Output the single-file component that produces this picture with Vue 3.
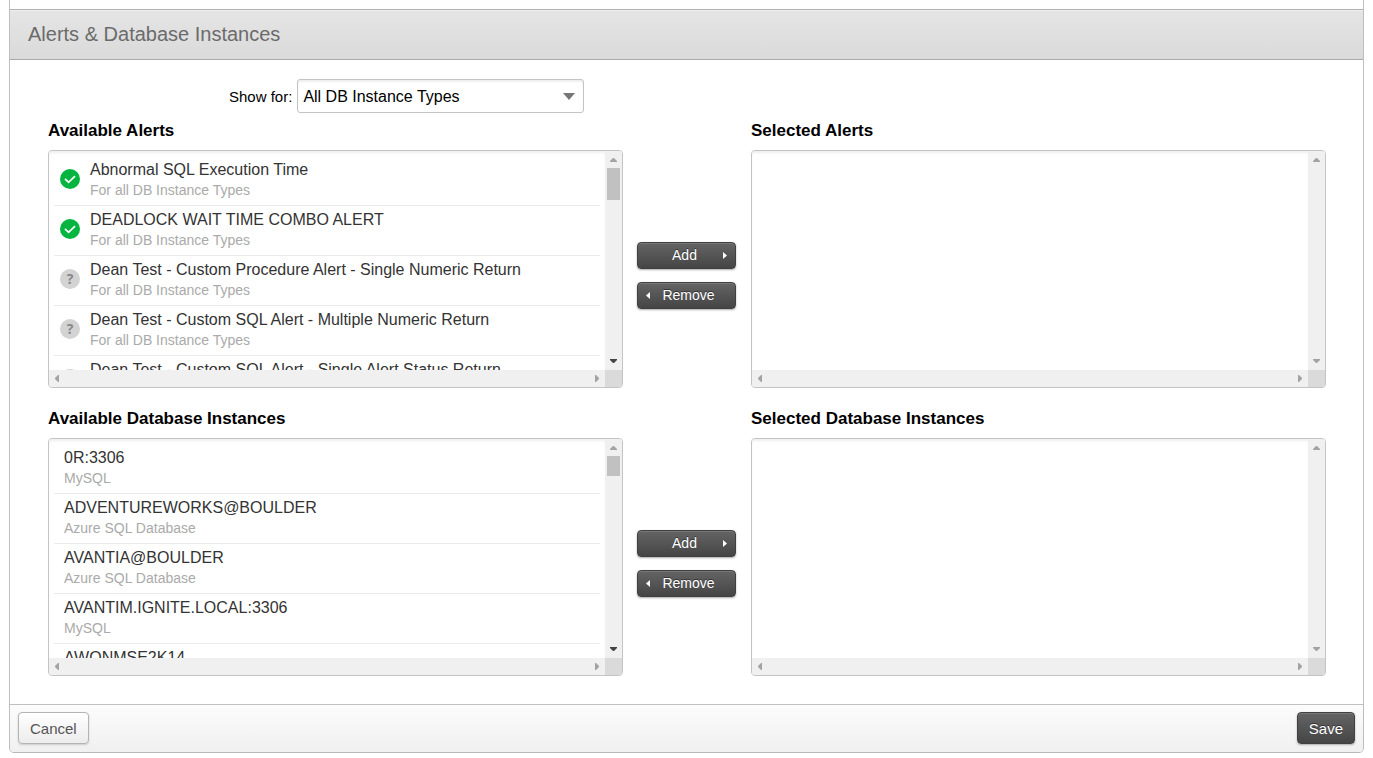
<script setup>
import { ref } from 'vue'

const instanceType = ref('all')

const groups = [
  {
    id: 'alerts',
    available: 'Available Alerts',
    selected: 'Selected Alerts',
    thumb: 'long',
    items: [
      { title: 'Abnormal SQL Execution Time', note: 'For all DB Instance Types', status: 'ok' },
      { title: 'DEADLOCK WAIT TIME COMBO ALERT', note: 'For all DB Instance Types', status: 'ok' },
      { title: 'Dean Test - Custom Procedure Alert - Single Numeric Return', note: 'For all DB Instance Types', status: 'unknown' },
      { title: 'Dean Test - Custom SQL Alert - Multiple Numeric Return', note: 'For all DB Instance Types', status: 'unknown' },
      { title: 'Dean Test - Custom SQL Alert - Single Alert Status Return', note: 'For all DB Instance Types', status: 'unknown' }
    ]
  },
  {
    id: 'instances',
    available: 'Available Database Instances',
    selected: 'Selected Database Instances',
    thumb: 'short',
    items: [
      { title: '0R:3306', note: 'MySQL' },
      { title: 'ADVENTUREWORKS@BOULDER', note: 'Azure SQL Database' },
      { title: 'AVANTIA@BOULDER', note: 'Azure SQL Database' },
      { title: 'AVANTIM.IGNITE.LOCAL:3306', note: 'MySQL' },
      { title: 'AWONMSE2K14', note: '' }
    ]
  }
]
</script>

<template>
  <main class="panel">
    <header class="panel-head">
      <h1>Alerts &amp; Database Instances</h1>
    </header>

    <div class="panel-body">
      <div class="filter">
        <label for="instance-type">Show for:</label>
        <div class="select-wrap">
          <select id="instance-type" v-model="instanceType">
            <option value="all">All DB Instance Types</option>
          </select>
          <svg class="caret" width="12" height="8" viewBox="0 0 12 8" aria-hidden="true">
            <path d="M0 1h12L6 8z" fill="#777" />
          </svg>
        </div>
      </div>

      <div v-for="group in groups" :key="group.id" class="picker">
        <section v-for="side in ['available', 'selected']" :key="side" :class="['column', side]">
          <h2>{{ group[side] }}</h2>
          <div class="listbox">
            <ul class="list">
              <template v-if="side === 'available'">
                <li v-for="item in group.items" :key="item.title" class="item">
                  <span v-if="item.status === 'ok'" class="status ok">
                    <svg width="20" height="20" viewBox="0 0 20 20" aria-hidden="true">
                      <path d="M5 9.8l3.6 3.6L15 7.2" fill="none" stroke="#fff" stroke-width="1.7" />
                    </svg>
                  </span>
                  <span v-else-if="item.status" class="status unknown">?</span>
                  <div class="item-text">
                    <div class="title">{{ item.title }}</div>
                    <div v-if="item.note" class="note">{{ item.note }}</div>
                  </div>
                </li>
              </template>
            </ul>
            <div class="bar vertical" aria-hidden="true">
              <svg width="17" height="17" viewBox="0 0 17 17"><path d="M5 11v-1l3-3h1l3 3v1z" fill="#a3a3a3" /></svg>
              <div v-if="side === 'available'" :class="['thumb', group.thumb]"></div>
              <svg class="end" width="17" height="17" viewBox="0 0 17 17">
                <path d="M5 6v1l3 3h1l3-3V6z" :fill="side === 'available' ? '#454545' : '#a3a3a3'" />
              </svg>
            </div>
            <div class="bar horizontal" aria-hidden="true">
              <svg width="17" height="17" viewBox="0 0 17 17"><path d="M10 5H9L6 8v1l3 3h1z" fill="#a3a3a3" /></svg>
              <svg class="end" width="17" height="17" viewBox="0 0 17 17"><path d="M7 5h1l3 3v1l-3 3H7z" fill="#a3a3a3" /></svg>
            </div>
            <div class="corner"></div>
          </div>
        </section>

        <div class="moves">
          <button type="button" class="btn dark move">
            <span>Add</span>
            <svg width="4" height="7" viewBox="0 0 4 7" aria-hidden="true"><path d="M0 0l4 3.5L0 7z" fill="#fff" /></svg>
          </button>
          <button type="button" class="btn dark move">
            <svg width="4" height="7" viewBox="0 0 4 7" aria-hidden="true"><path d="M4 0L0 3.5L4 7z" fill="#fff" /></svg>
            <span>Remove</span>
          </button>
        </div>
      </div>
    </div>

    <footer class="panel-foot">
      <button type="button" class="btn light">Cancel</button>
      <button type="button" class="btn dark">Save</button>
    </footer>
  </main>
</template>

<style>
body {
  background: #fff;
}
</style>

<style scoped>
.panel {
  box-sizing: border-box;
  margin: 0 9px;
  padding-top: 9px;
  border: 1px solid #bebebe;
  border-top: 0;
  border-bottom-color: #b8b8bc;
  border-radius: 0 0 5px 5px;
  font-family: "Liberation Sans", Arial, sans-serif;
  color: #000;
}
.panel-head {
  padding: 0 18px;
  border-top: 1px solid #b0b0b0;
  border-bottom: 1px solid #a9a9a9;
  background: linear-gradient(#e5e5e5, #dadada);
  box-shadow: inset 0 1px #eee;
}
h1 {
  margin: 0;
  font-size: 20px;
  line-height: 49px;
  font-weight: 400;
  color: #6b6b6b;
}
.panel-body {
  padding: 19px 37px 28px 38px;
}
.filter {
  display: flex;
  align-items: center;
  gap: 5px;
  padding-left: 181px;
}
.filter label {
  font-size: 15px;
}
.select-wrap {
  display: grid;
  align-items: center;
  width: 287px;
}
select {
  grid-area: 1 / 1;
  box-sizing: border-box;
  width: 100%;
  height: 34px;
  padding: 0 28px 0 5px;
  border: 1px solid #c4c4c4;
  border-radius: 3px;
  background: #fff;
  box-shadow: inset 0 2px 2px #eee;
  appearance: none;
  font: 16px "Liberation Sans", Arial, sans-serif;
  color: #000;
}
.caret {
  grid-area: 1 / 1;
  justify-self: end;
  margin-right: 9px;
  pointer-events: none;
}
.picker {
  display: grid;
  grid-template-columns: minmax(0, 1fr) 128px minmax(0, 1fr);
}
.picker + .picker {
  margin-top: 13px;
}
.column {
  grid-row: 1;
}
.available {
  grid-column: 1;
}
.selected {
  grid-column: 3;
}
h2 {
  margin: 0 0 2px;
  font-size: 17px;
  line-height: 35px;
  font-weight: 700;
}
.listbox {
  display: grid;
  grid-template: 219px 17px / minmax(0, 1fr) 17px;
  border: 1px solid #c4c4c4;
  border-radius: 4px;
  overflow: hidden;
}
.list {
  margin: 0;
  padding: 5px;
  list-style: none;
  overflow: hidden;
  box-shadow: inset 0 3px 3px -1px #eee;
}
.item {
  display: flex;
  box-sizing: border-box;
  height: 50px;
  padding: 3px 0 0 10px;
  border-bottom: 1px solid #ebebeb;
}
.item:has(.status) {
  padding-left: 6px;
}
.status {
  flex: none;
  width: 20px;
  height: 20px;
  margin: 10px 10px 0 0;
  border-radius: 50%;
}
.status svg {
  display: block;
}
.ok {
  background: #05b540;
}
.unknown {
  background: #d3d3d3;
  color: #888;
  font: 700 14px/20px "Open Sans", "Liberation Sans", sans-serif;
  text-align: center;
}
.item-text {
  white-space: nowrap;
}
.title {
  font-size: 16px;
  line-height: 21px;
  color: #333;
}
.note {
  font-size: 14px;
  line-height: 21px;
  color: #aaa;
}
.bar {
  display: flex;
  background: #f0f0f0;
}
.bar svg {
  display: block;
  flex: none;
}
.vertical {
  flex-direction: column;
}
.vertical .end {
  margin-top: auto;
}
.horizontal .end {
  margin-left: auto;
}
.thumb {
  margin: 0 2px;
  background: #c1c1c1;
}
.long {
  height: 32px;
}
.short {
  height: 20px;
}
.corner {
  background: #dadada;
}
.moves {
  grid-area: 1 / 2;
  display: flex;
  flex-direction: column;
  gap: 13px;
  padding: 129px 15px 0 14px;
}
.btn {
  box-sizing: border-box;
  height: 32px;
  padding: 0 11px;
  border-radius: 4px;
  font: 15px "Liberation Sans", Arial, sans-serif;
}
.dark {
  border: 1px solid #404040;
  background: linear-gradient(#646464, #454545);
  box-shadow: inset 0 1px #777, 0 1px 2px #aaa;
  color: #fff;
  text-shadow: 0 -1px #333;
}
.light {
  border: 1px solid #b4b4b4;
  background: linear-gradient(#fff, #ececec);
  box-shadow: 0 1px 2px #ccc;
  color: #555;
}
.move {
  display: flex;
  align-items: center;
  height: 27px;
  padding: 0 8px 1px;
  font-size: 14px;
}
.move span {
  flex: 1;
}
.panel-foot {
  display: flex;
  justify-content: space-between;
  padding: 7px 8px 8px;
  border-top: 1px solid #c0c0c0;
  border-radius: 0 0 4px 4px;
  background: linear-gradient(#fcfcfc, #f0f0f0);
}
</style>
